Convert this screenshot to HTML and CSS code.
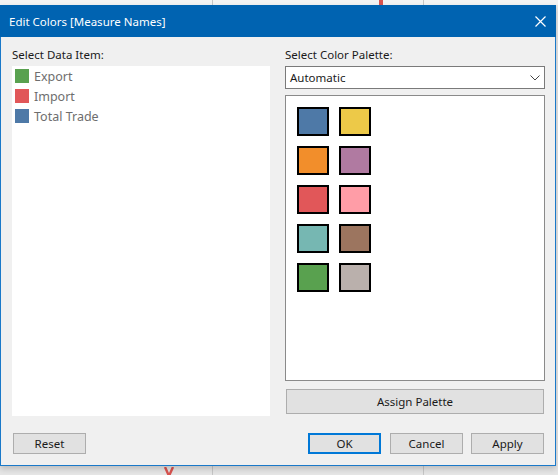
FILE: index.html
```html
<!DOCTYPE html>
<html>
<head>
<meta charset="utf-8">
<link rel="stylesheet" href="styles.css">
</head>
<body>
<div class="backdrop">
  <span class="bg-line line-a"></span>
  <span class="bg-line line-b"></span>
  <span class="bg-red-bar"></span>
  <svg class="bg-mark" width="10" height="9" viewBox="0 0 10 9"><polyline points="1,0 5,9 9,0" fill="none" stroke="#d9534f" stroke-width="2.4"/></svg>
</div>
<div class="stage">
  <div class="dialog">
    <div class="titlebar">
      <span class="title">Edit Colors [Measure Names]</span>
      <svg class="close" width="11" height="11" viewBox="0 0 11 11"><path d="M0.5 0.5 L10.5 10.5 M10.5 0.5 L0.5 10.5" stroke="#fff" stroke-width="1.2"/></svg>
    </div>
    <div class="content">
      <div class="panels">
        <div class="label">Select Data Item:</div>
        <div class="label">Select Color Palette:</div>
        <div class="listbox">
          <div class="item"><span class="chip c-green"></span>Export</div>
          <div class="item"><span class="chip c-red"></span>Import</div>
          <div class="item"><span class="chip c-blue"></span>Total Trade</div>
        </div>
        <div class="right">
          <div class="select">
            <span>Automatic</span>
            <svg width="10" height="6" viewBox="0 0 10 6"><polyline points="0.5,0.5 5,5 9.5,0.5" fill="none" stroke="#444" stroke-width="1"/></svg>
          </div>
          <div class="palette">
            <span class="sw c-blue"></span><span class="sw c-yellow"></span>
            <span class="sw c-orange"></span><span class="sw c-purple"></span>
            <span class="sw c-red"></span><span class="sw c-pink"></span>
            <span class="sw c-teal"></span><span class="sw c-brown"></span>
            <span class="sw c-green"></span><span class="sw c-gray"></span>
          </div>
          <button class="btn assign">Assign Palette</button>
        </div>
      </div>
      <div class="footer">
        <button class="btn small">Reset</button>
        <div class="actions">
          <button class="btn small default">OK</button>
          <button class="btn small">Cancel</button>
          <button class="btn small">Apply</button>
        </div>
      </div>
    </div>
  </div>
</div>
</body>
</html>
```
FILE: styles.css
```css
html, body {
  margin: 0;
  padding: 0;
}
body {
  width: 558px;
  height: 475px;
  overflow: hidden;
  background: #ebebeb;
  font-family: "Noto Sans", "Open Sans", sans-serif;
  position: relative;
}
.backdrop {
  position: absolute;
  inset: 0;
  background: linear-gradient(#f3f3f3 0, #f3f3f3 5px, #e6e6e6 5px);
}
.bg-line {
  position: absolute;
  width: 1px;
  top: 0;
  bottom: 0;
  background: #c6c6c6;
}
.line-a { left: 212px; }
.line-b { left: 423px; }
.bg-red-bar {
  position: absolute;
  left: 379px;
  top: 0;
  width: 4px;
  height: 5px;
  background: #d9534f;
}
.bg-mark {
  position: absolute;
  left: 164px;
  top: 467px;
}
.stage {
  position: relative;
  padding-top: 5px;
}
.dialog {
  width: 556px;
  height: 461px;
  box-sizing: border-box;
  border: 1px solid #1a79c9;
  border-top: none;
  background: #f0f0f0;
  box-shadow: 0 3px 6px rgba(0,0,0,0.18);
  display: flex;
  flex-direction: column;
}
.titlebar {
  height: 32px;
  margin: 0 -1px;
  background: #0063b1;
  color: #fff;
  display: flex;
  align-items: center;
  justify-content: space-between;
  padding: 0 9px 0 9px;
  font-size: 11.5px;
}
.close {
  margin-right: 1px;
}
.content {
  padding: 9px 10px 0 11px;
  display: flex;
  flex-direction: column;
}
.panels {
  display: grid;
  grid-template-columns: 258px 260px;
  grid-template-rows: 20px auto;
  column-gap: 15px;
}
.label {
  font-size: 11.5px;
  color: #1a1a1a;
  line-height: 17px;
}
.listbox {
  background: #fff;
  height: 350px;
  box-sizing: border-box;
}
.item {
  display: flex;
  align-items: center;
  height: 20px;
  padding-left: 3px;
  font-size: 12.5px;
  color: #6e6e6e;
}
.chip {
  width: 14px;
  height: 14px;
  margin-right: 5px;
}
.right {
  display: flex;
  flex-direction: column;
}
.select {
  height: 23px;
  box-sizing: border-box;
  border: 1px solid #7a7a7a;
  background: #fff;
  display: flex;
  align-items: center;
  justify-content: space-between;
  padding: 0 4px 0 4px;
  font-size: 11.5px;
  color: #1a1a1a;
}
.palette {
  margin-top: 6px;
  height: 286px;
  box-sizing: border-box;
  border: 1px solid #8a8a8a;
  background: #fff;
  padding: 11px 0 0 11px;
  display: grid;
  grid-template-columns: 32px 32px;
  grid-auto-rows: 29px;
  column-gap: 10px;
  row-gap: 10px;
  align-content: start;
}
.sw {
  box-sizing: border-box;
  border: 2px solid #000;
}
.btn {
  font-family: "Noto Sans", "Open Sans", sans-serif;
  font-size: 11.5px;
  color: #1a1a1a;
  background: #e1e1e1;
  border: 1px solid #adadad;
  box-sizing: border-box;
  padding: 0;
  margin: 0;
}
.assign {
  margin-top: 8px;
  height: 25px;
  width: 258px;
  margin-left: 1px;
}
.footer {
  margin-top: 17px;
  display: flex;
  justify-content: space-between;
  align-items: center;
}
.actions {
  display: flex;
  gap: 8px;
  margin-right: 1px;
}
.small {
  width: 73px;
  height: 21px;
}
.footer > .small {
  margin-left: 1px;
}
.default {
  border: 2px solid #0078d7;
  margin-right: 1px;
}
.c-blue { background: #4e79a7; }
.c-yellow { background: #edc948; }
.c-orange { background: #f28e2b; }
.c-purple { background: #b07aa1; }
.c-red { background: #e15759; }
.c-pink { background: #ff9da7; }
.c-teal { background: #76b7b2; }
.c-brown { background: #9c755f; }
.c-green { background: #59a14f; }
.c-gray { background: #bab0ac; }
```
